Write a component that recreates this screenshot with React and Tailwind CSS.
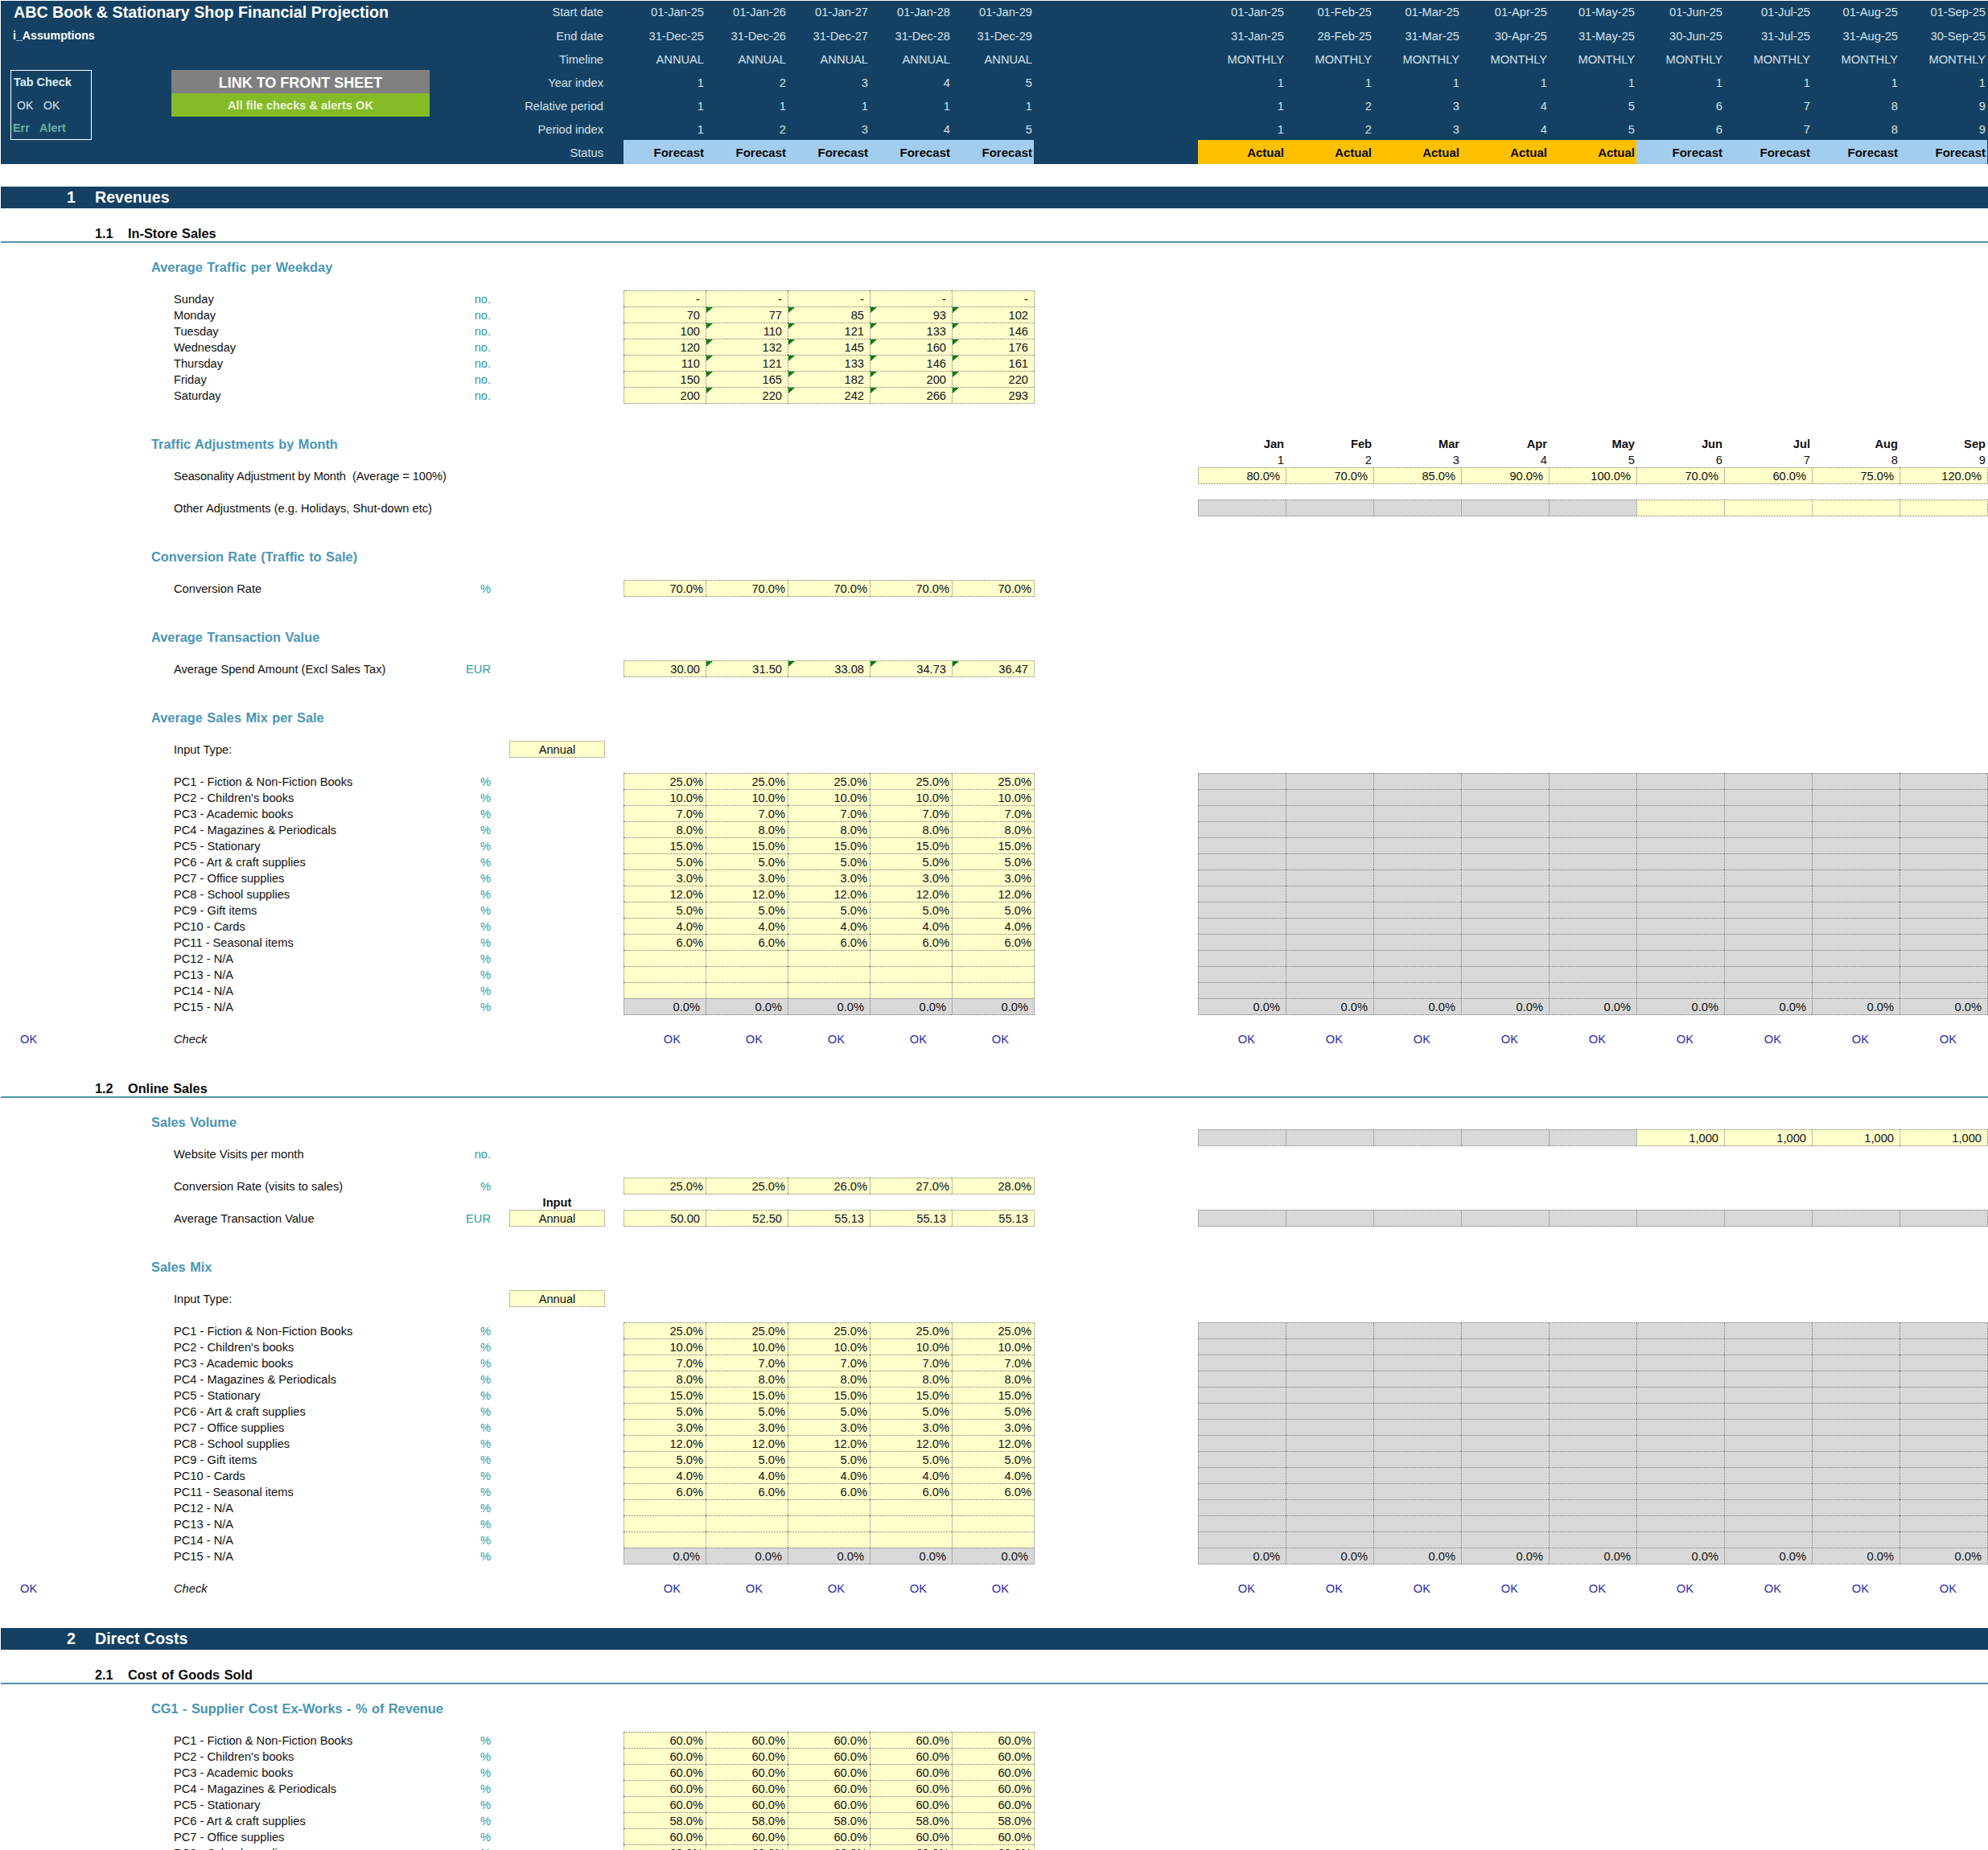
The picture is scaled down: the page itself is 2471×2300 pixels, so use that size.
import React from "react";

const dates1 = ["01-Jan-25","01-Feb-25","01-Mar-25","01-Apr-25","01-May-25","01-Jun-25","01-Jul-25","01-Aug-25","01-Sep-25"];
const dates2 = ["31-Jan-25","28-Feb-25","31-Mar-25","30-Apr-25","31-May-25","30-Jun-25","31-Jul-25","31-Aug-25","30-Sep-25"];
const nine = [1,2,3,4,5,6,7,8,9];
const months = ["Jan","Feb","Mar","Apr","May","Jun","Jul","Aug","Sep"];
const PC = ["PC1 - Fiction & Non-Fiction Books","PC2 - Children's books","PC3 - Academic books","PC4 - Magazines & Periodicals","PC5 - Stationary","PC6 - Art & craft supplies","PC7 - Office supplies","PC8 - School supplies","PC9 - Gift items","PC10 - Cards","PC11 - Seasonal items","PC12 - N/A","PC13 - N/A","PC14 - N/A","PC15 - N/A"];
const mix = ["25.0%","10.0%","7.0%","8.0%","15.0%","5.0%","3.0%","12.0%","5.0%","4.0%","6.0%","","",""];

function HRow({ h, a, m, bold }) {
  return (
    <div className={`flex ${h}`}>
      <div className="flex w-[510px] shrink-0">
        {a.map((v, i) => (
          <div key={i} className={`w-[102px] shrink-0 flex items-center justify-end pr-[2px] ${bold ? "bg-[#a3cdee] font-bold text-[15px] text-[#0a0a0a]" : ""}`}>{v}</div>
        ))}
      </div>
      <div className="flex w-[982px] shrink-0 ml-[204px]">
        {m.map((v, i) => (
          <div key={i} className={`w-[109px] shrink-0 flex items-center justify-end pr-[2px] ${bold ? `font-bold text-[15px] text-[#0a0a0a] ${i < 5 ? "bg-[#ffc000]" : "bg-[#a3cdee]"}` : ""}`}>{v}</div>
        ))}
      </div>
    </div>
  );
}

function Header() {
  const labels = ["Start date","End date","Timeline","Year index","Relative period","Period index","Status"];
  const lh = ["h-[28px] pt-[1px]","h-[29px] pt-[3px]","h-[29px] pt-[3px]","h-[29px] pt-[3px]","h-[29px] pt-[3px]","h-[29px] pt-[3px]","h-[30px] pt-[2px]"];
  return (
    <div className="ml-px flex h-[203px] bg-[#144163] text-[14.67px] leading-none text-[#d6e1e9]">
      <div className="w-[774px] shrink-0 flex">
        <div className="w-[600px] shrink-0">
          <div className="h-[28px] pl-[16px] pt-[1px] flex items-center text-[19.7px] font-bold text-white">ABC Book &amp; Stationary Shop Financial Projection</div>
          <div className="h-[29px] pl-[15px] pt-[2px] flex items-center text-[14.2px] font-bold text-white">i_Assumptions</div>
          <div className="mt-[29px] pl-[12px] flex">
            <div className="w-[101px] h-[87px] border border-white">
              <div className="h-[28px] pl-[3px] pt-[1px] flex items-center font-bold text-[#dbeef4] text-[14.4px]">Tab Check</div>
              <div className="h-[29px] flex items-center relative text-[#dfe8ee] text-[14px]">
                <span className="ml-[7px] w-[33px]">OK</span><span>OK</span>
              </div>
              <div className="h-[28px] flex items-center font-bold text-[#6cb0a4] text-[14.4px]">
                <span className="ml-[2px] w-[33px]">Err</span><span>Alert</span>
              </div>
            </div>
            <div className="ml-[99px] w-[321px]">
              <div className="h-[29px] pt-[2px] bg-[#808080] flex items-center justify-center font-bold text-[18px] text-white">LINK TO FRONT SHEET</div>
              <div className="h-[29px] bg-[#85bb27] flex items-center justify-center pt-[1px] font-bold text-[14.6px] text-[#eef5dc]">All file checks &amp; alerts OK</div>
            </div>
          </div>
        </div>
        <div className="flex-1 pr-[25px]">
          {labels.map((l, i) => (
            <div key={l} className={`${lh[i]} flex items-center justify-end`}>{l}</div>
          ))}
        </div>
      </div>
      <div className="shrink-0">
        <HRow h="h-[28px] pt-[1px]" a={["01-Jan-25","01-Jan-26","01-Jan-27","01-Jan-28","01-Jan-29"]} m={dates1} />
        <HRow h="h-[29px] pt-[3px]" a={["31-Dec-25","31-Dec-26","31-Dec-27","31-Dec-28","31-Dec-29"]} m={dates2} />
        <HRow h="h-[29px] pt-[3px]" a={Array(5).fill("ANNUAL")} m={Array(9).fill("MONTHLY")} />
        <HRow h="h-[29px] pt-[3px]" a={[1,2,3,4,5]} m={Array(9).fill(1)} />
        <HRow h="h-[29px] pt-[3px]" a={[1,1,1,1,1]} m={nine} />
        <HRow h="h-[29px] pt-[3px]" a={[1,2,3,4,5]} m={nine} />
        <HRow h="h-[30px]" a={Array(5).fill("Forecast")} m={months.map((_, i) => (i < 5 ? "Actual" : "Forecast"))} bold />
      </div>
    </div>
  );
}

function Section({ n, title }) {
  return (
    <div className="ml-px h-[27px] pt-px bg-[#144163] flex items-center text-white font-bold text-[19.6px] leading-none">
      <span className="w-[93px] text-right shrink-0">{n}</span>
      <span className="ml-[24px]">{title}</span>
    </div>
  );
}

function Sub({ n, title }) {
  return (
    <div className="ml-px pt-[21px] h-[43px] border-b-2 border-[#4f93ab] box-border">
      <div className="h-[20px] flex items-center text-[16.3px] font-bold text-[#0a0a0a] leading-none [word-spacing:1px]">
        <span className="ml-[117px] w-[41px]">{n}</span>
        <span>{title}</span>
      </div>
    </div>
  );
}

function Heading({ children }) {
  return (
    <div className="h-[20px] pl-[188px] pt-[2px] flex items-center font-bold text-[16.35px] leading-none text-[#4a96b4] [word-spacing:0.9px]">{children}</div>
  );
}

function Cell({ c, wide, last, bottom, tri }) {
  const tone = c.g ? "bg-[#d9d9d9]" : "bg-[#ffffcc]";
  const w = wide ? (last ? "w-[110px]" : "w-[109px]") : (last ? "w-[103px]" : "w-[102px]");
  return (
    <div className={`relative shrink-0 ${w} ${bottom ? "h-[21px] border-b" : "h-[20px]"} ${last ? "border-r" : ""} border-t border-l border-dotted border-[#7a7a7a] ${tone} ${c.tight ? "pr-[3px]" : "pr-[7px]"} pt-px flex items-center justify-end`}>
      {c.v}
      {tri && <span className="absolute left-0 top-0 w-[8px] h-[7px] bg-[#0e7a10] [clip-path:polygon(0_0,100%_0,0_100%)]" />}
    </div>
  );
}

function Group({ cells, wide, bottom, tri }) {
  return cells.map((c, i) => (
    <Cell key={i} c={c} wide={wide} last={i === cells.length - 1} bottom={bottom} tri={tri && i > 0} />
  ));
}

function Row({ label, unit, italic, narrow, ok, input, inputBold, a, m, bottom, tri, aOk, mOk, mHead, mHeadBold }) {
  return (
    <div className="flex h-[20px] text-[14.67px] leading-none text-[#111111]">
      <div className="w-[216px] shrink-0 pl-[25px] pt-[2px] flex items-center text-[#2c2ca6]">{ok ? "OK" : ""}</div>
      <div className="w-[394px] shrink-0 pt-[2px] flex items-center justify-between whitespace-pre">
        <span className={`${italic ? "italic" : ""} ${narrow ? "tracking-[-0.09px]" : ""}`}>{label}</span>
        <span className="text-[#2e9c9f]">{unit}</span>
      </div>
      <div className="w-[119px] ml-[23px] shrink-0">
        {input && <div className="h-[21px] pt-px border border-dotted border-[#7a7a7a] bg-[#ffffcc] flex items-center justify-center">{input}</div>}
        {inputBold && <div className="h-[20px] pt-[2px] flex items-center justify-center font-bold">{inputBold}</div>}
      </div>
      <div className="w-[510px] ml-[23px] shrink-0 flex">
        {a && <Group cells={a} bottom={bottom} tri={tri} />}
        {aOk && [0,1,2,3,4].map((i) => <div key={i} className="w-[102px] pr-[31px] pt-[2px] flex items-center justify-end text-[#2c2ca6]">OK</div>)}
      </div>
      <div className="w-[981px] ml-[204px] shrink-0 flex">
        {m && <Group cells={m} wide bottom={bottom} />}
        {mOk && nine.map((i) => <div key={i} className="w-[109px] pr-[38px] pt-[2px] flex items-center justify-end text-[#2c2ca6]">OK</div>)}
        {mHead && mHead.map((v, i) => <div key={i} className={`w-[109px] pr-[2px] pt-[2px] flex items-center justify-end ${mHeadBold ? "font-bold" : ""}`}>{v}</div>)}
      </div>
    </div>
  );
}

const nums = (vals) => vals.map((v) => ({ v }));
const pct = (vals) => vals.map((v) => ({ v, tight: true }));
const same = (v, n = 5) => Array(n).fill(v);
const grayRow = (n = 9, v = "") => Array(n).fill({ v, g: true });
const blankY = (n) => Array(n).fill({ v: "" });

function Mix() {
  return (
    <>
      {PC.map((p, i) => {
        const last = i === 14;
        return (
          <Row key={p} label={p} unit="%" bottom={last}
            a={last ? grayRow(5, "0.0%") : pct(same(mix[i]))}
            m={last ? grayRow(9, "0.0%") : grayRow(9)} />
        );
      })}
    </>
  );
}

export default function App() {
  return (
    <div className="w-[2471px] h-[2300px] overflow-hidden bg-white pt-px font-['Liberation_Sans',Arial,sans-serif]">
      <Header />
      <div className="h-[28px]" />
      <Section n="1" title="Revenues" />
      <Sub n="1.1" title="In-Store Sales" />
      <div className="h-[19px]" />
      <Heading>Average Traffic per Weekday</Heading>
      <div className="h-[20px]" />
      <Row label="Sunday" unit="no." a={nums(same("-"))} />
      <Row label="Monday" unit="no." tri a={nums([70,77,85,93,102])} />
      <Row label="Tuesday" unit="no." tri a={nums([100,110,121,133,146])} />
      <Row label="Wednesday" unit="no." tri a={nums([120,132,145,160,176])} />
      <Row label="Thursday" unit="no." tri a={nums([110,121,133,146,161])} />
      <Row label="Friday" unit="no." tri a={nums([150,165,182,200,220])} />
      <Row label="Saturday" unit="no." tri bottom a={nums([200,220,242,266,293])} />
      <div className="h-[40px]" />
      <Row mHead={months} mHeadBold />
      <div className="-mt-[20px]"><Heading>Traffic Adjustments by Month</Heading></div>
      <Row mHead={nine} />
      <Row label="Seasonality Adjustment by Month  (Average = 100%)" narrow bottom m={nums(["80.0%","70.0%","85.0%","90.0%","100.0%","70.0%","60.0%","75.0%","120.0%"])} />
      <div className="h-[20px]" />
      <Row label="Other Adjustments (e.g. Holidays, Shut-down etc)" bottom m={[...grayRow(5), ...blankY(4)]} />
      <div className="h-[40px]" />
      <Heading>Conversion Rate (Traffic to Sale)</Heading>
      <div className="h-[20px]" />
      <Row label="Conversion Rate" unit="%" bottom a={pct(same("70.0%"))} />
      <div className="h-[40px]" />
      <Heading>Average Transaction Value</Heading>
      <div className="h-[20px]" />
      <Row label="Average Spend Amount (Excl Sales Tax)" unit="EUR" bottom tri a={nums(["30.00","31.50","33.08","34.73","36.47"])} />
      <div className="h-[40px]" />
      <Heading>Average Sales Mix per Sale</Heading>
      <div className="h-[20px]" />
      <Row label="Input Type:" input="Annual" />
      <div className="h-[20px]" />
      <Mix />
      <div className="h-[20px]" />
      <Row label="Check" italic ok aOk mOk />
      <div className="h-[21px]" />
      <Sub n="1.2" title="Online Sales" />
      <div className="h-[19px]" />
      <Heading>Sales Volume</Heading>
      <Row bottom m={[...grayRow(5), ...nums(same("1,000", 4))]} />
      <Row label="Website Visits per month" unit="no." />
      <div className="h-[20px]" />
      <Row label="Conversion Rate (visits to sales)" unit="%" bottom a={pct(["25.0%","25.0%","26.0%","27.0%","28.0%"])} />
      <Row inputBold="Input" />
      <Row label="Average Transaction Value" unit="EUR" input="Annual" bottom a={nums(["50.00","52.50","55.13","55.13","55.13"])} m={grayRow(9)} />
      <div className="h-[40px]" />
      <Heading>Sales Mix</Heading>
      <div className="h-[20px]" />
      <Row label="Input Type:" input="Annual" />
      <div className="h-[20px]" />
      <Mix />
      <div className="h-[20px]" />
      <Row label="Check" italic ok aOk mOk />
      <div className="h-[40px]" />
      <Section n="2" title="Direct Costs" />
      <Sub n="2.1" title="Cost of Goods Sold" />
      <div className="h-[19px]" />
      <Heading>CG1 - Supplier Cost Ex-Works - % of Revenue</Heading>
      <div className="h-[20px]" />
      {PC.slice(0, 8).map((p, i) => (
        <Row key={p} label={p} unit="%" a={pct(same(i === 5 ? "58.0%" : "60.0%"))} />
      ))}
    </div>
  );
}
